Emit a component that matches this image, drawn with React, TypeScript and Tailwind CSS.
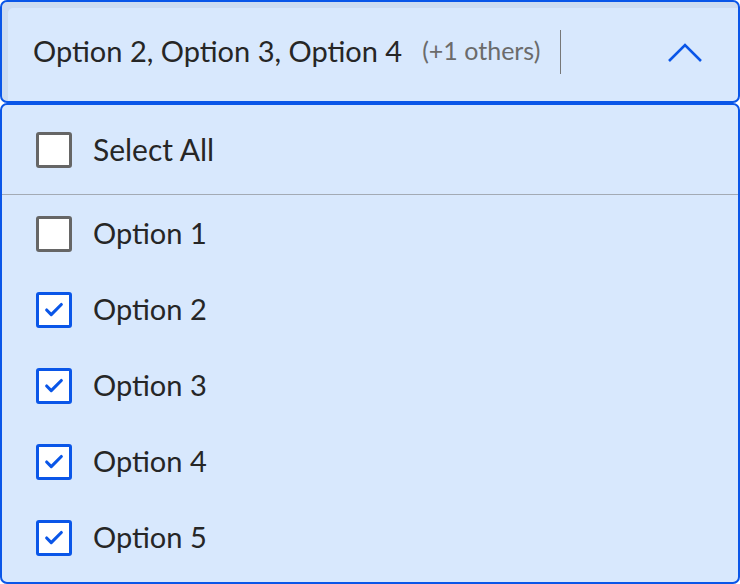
import { Check } from "lucide-react";

const options = [
  { label: "Option 1", checked: false },
  { label: "Option 2", checked: true },
  { label: "Option 3", checked: true },
  { label: "Option 4", checked: true },
  { label: "Option 5", checked: true },
];

const Box = ({ checked }: { checked: boolean }) => (
  <div
    className={
      checked
        ? "w-9 h-9 shrink-0 rounded-[3px] border-[3px] border-[#0a56e8] bg-white flex items-center justify-center"
        : "w-9 h-9 shrink-0 rounded-[3px] border-[3px] border-[#666666] bg-white"
    }
  >
    {checked && <Check className="w-[22px] h-[22px] text-[#0a56e8]" strokeWidth={3.4} />}
  </div>
);

export default function App() {
  return (
    <div className="w-[740px] h-[584px] flex flex-col bg-white text-[#262626] font-['Lato',sans-serif]">
      <div className="h-[103px] shrink-0 rounded-[7px] border-2 border-[#0a56e8] bg-[#d8e8fd] shadow-[inset_6px_6px_0_#cddcf1] flex items-center pl-[31px] pr-[35px]">
        <span className="text-[29px] leading-none mb-[2px]">Option 2, Option 3, Option 4</span>
        <span className="ml-[20px] text-[25px] leading-none text-[#6b6b6b] mb-[2px]">(+1 others)</span>
        <div className="ml-[20px] w-px h-[44px] bg-[#777777]" />
        <svg className="ml-auto" width="36" height="22" viewBox="0 0 36 22" fill="none">
          <path d="M2 20 L18 4 L34 20" stroke="#0a56e8" strokeWidth="2.6" />
        </svg>
      </div>
      <div className="flex-1 rounded-[7px] border-2 border-[#0a56e8] bg-[#d8e8fd] flex flex-col">
        <div className="h-[90px] flex items-center gap-[21px] pl-[34px] border-b border-[#a3aab4]">
          <Box checked={false} />
          <span className="text-[30px] leading-none mb-[2px]">Select All</span>
        </div>
        <div className="flex flex-col pt-[1px]">
          {options.map((o) => (
            <div key={o.label} className="h-[76px] flex items-center gap-[21px] pl-[34px]">
              <Box checked={o.checked} />
              <span className="text-[29px] leading-none mb-[3px]">{o.label}</span>
            </div>
          ))}
        </div>
      </div>
    </div>
  );
}
